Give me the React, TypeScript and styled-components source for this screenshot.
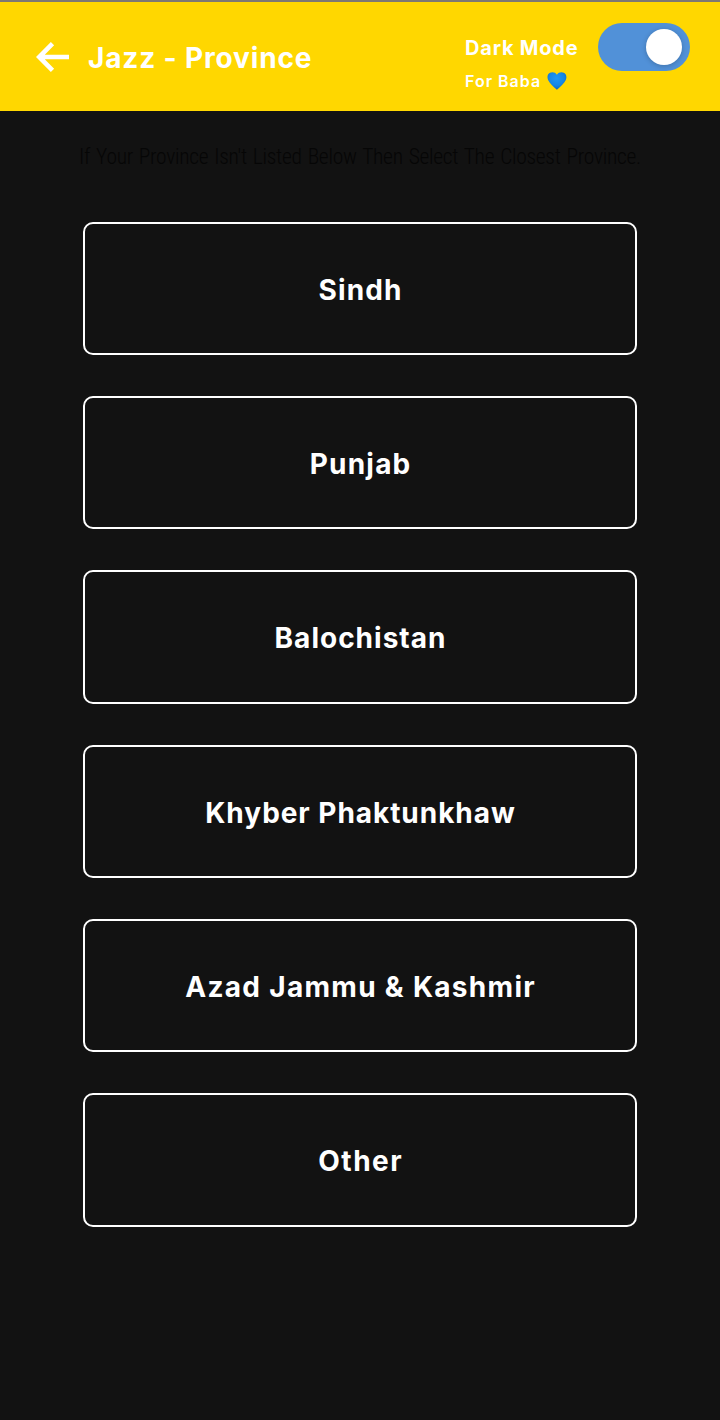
import React, { useState } from "react";
import styled, { createGlobalStyle } from "styled-components";

const GlobalStyle = createGlobalStyle`
  * { box-sizing: border-box; }
  body { margin: 0; background: #121212; }
`;

const Screen = styled.div`
  min-height: 1420px;
  background: #121212;
  color: #fff;
  font-family: Inter, "Liberation Sans", sans-serif;
  font-weight: 700;
`;

const Header = styled.header`
  display: flex;
  align-items: flex-start;
  height: 111px;
  padding: 0 30px 0 36px;
  border-top: 2px solid #7d7873;
  background: #ffd700;
`;

const BackButton = styled.button`
  display: block;
  width: 34px;
  height: 30px;
  margin: 40px 18px 0 0;
  padding: 0;
  border: 0;
  background: none;
  color: #fff;
  svg { display: block; }
`;

const Title = styled.h1<{ $tracking: number }>`
  flex: 1;
  margin: 38px 0 0;
  font-size: 28px;
  line-height: 36px;
  font-weight: 700;
  white-space: nowrap;
  letter-spacing: ${(p) => p.$tracking}px;
`;

const ModeLabels = styled.div`
  width: 133px;
  padding-top: 33px;
  white-space: nowrap;
`;

const ModeName = styled.div`
  font-size: 20px;
  line-height: 26px;
  letter-spacing: 0.8px;
`;

const Dedication = styled.div`
  display: flex;
  align-items: center;
  gap: 6px;
  margin-top: 8px;
  font-size: 16px;
  line-height: 24px;
  font-weight: 600;
  letter-spacing: 1px;
`;

const Switch = styled.button`
  display: flex;
  justify-content: flex-end;
  width: 92px;
  height: 48px;
  margin-top: 21px;
  padding: 6px 8px;
  border: 0;
  border-radius: 24px;
  background: #5191d8;
`;

const Knob = styled.span`
  width: 36px;
  height: 36px;
  border-radius: 50%;
  background: #fff;
  box-shadow: 0 1px 5px rgba(0, 0, 0, 0.22);
`;

const Hint = styled.p`
  margin: 32px 0 0;
  height: 28px;
  color: #060606;
  font-family: Roboto, "Liberation Sans", sans-serif;
  font-size: 21.5px;
  line-height: 28px;
  font-weight: 350;
  font-stretch: 85%;
  letter-spacing: -0.3px;
  word-spacing: 1.4px;
  text-align: center;
  white-space: nowrap;
`;

const ProvinceList = styled.main`
  display: flex;
  flex-direction: column;
  gap: 40.97px;
  margin: 50.7px 83px 0;
`;

const ProvinceButton = styled.button<{ $tracking: number }>`
  height: 133.35px;
  padding: 2.8px 0 0;
  border: 2px solid #fff;
  border-radius: 10px;
  background: transparent;
  color: #fff;
  font-family: inherit;
  font-size: 28px;
  line-height: 36px;
  font-weight: 700;
  letter-spacing: ${(p) => p.$tracking}px;
  text-indent: ${(p) => p.$tracking}px;
`;

const provinces = [
  { name: "Sindh", tracking: 1.1 },
  { name: "Punjab", tracking: 1.2 },
  { name: "Balochistan", tracking: 1 },
  { name: "Khyber Phaktunkhaw", tracking: 0.95 },
  { name: "Azad Jammu & Kashmir", tracking: 1.3 },
  { name: "Other", tracking: 1.5 },
];

const BackArrow = () => (
  <svg width="34" height="30" viewBox="0 0 34 30" fill="none" stroke="currentColor" strokeWidth="4.6">
    <path d="M16.5 1.7 L3.2 15 L16.5 28.3 M3.2 15 H33" />
  </svg>
);

const BlueHeart = () => (
  <svg width="20" height="18" viewBox="0 0 20 18">
    <defs>
      <radialGradient id="heart" cx="0.48" cy="0.35" r="0.65">
        <stop offset="0" stopColor="#2196f3" />
        <stop offset="0.6" stopColor="#1687e5" />
        <stop offset="1" stopColor="#1265bd" />
      </radialGradient>
    </defs>
    <path
      d="M9.9 2.8 C8.5 0.2 5.3 -0.3 3 0.8 C0.4 2.1 -0.1 5.2 1.1 7.9 C2.6 11.4 6.5 14.5 9.9 17.8 C13.3 14.5 17.3 11.4 18.8 7.9 C20 5.2 19.4 2.1 16.8 0.8 C14.5 -0.3 11.3 0.2 9.9 2.8 Z"
      fill="url(#heart)"
    />
  </svg>
);

export default function App() {
  const [, setProvince] = useState<string | null>(null);
  return (
    <>
      <GlobalStyle />
      <Screen>
        <Header>
          <BackButton aria-label="Back"><BackArrow /></BackButton>
          <Title $tracking={0.85}>Jazz - Province</Title>
          <ModeLabels>
            <ModeName>Dark Mode</ModeName>
            <Dedication>For Baba <BlueHeart /></Dedication>
          </ModeLabels>
          <Switch role="switch" aria-checked="true" aria-label="Dark Mode"><Knob /></Switch>
        </Header>
        <Hint>If Your Province Isn't Listed Below Then Select The Closest Province.</Hint>
        <ProvinceList>
          {provinces.map((p) => (
            <ProvinceButton key={p.name} $tracking={p.tracking} onClick={() => setProvince(p.name)}>
              {p.name}
            </ProvinceButton>
          ))}
        </ProvinceList>
      </Screen>
    </>
  );
}
